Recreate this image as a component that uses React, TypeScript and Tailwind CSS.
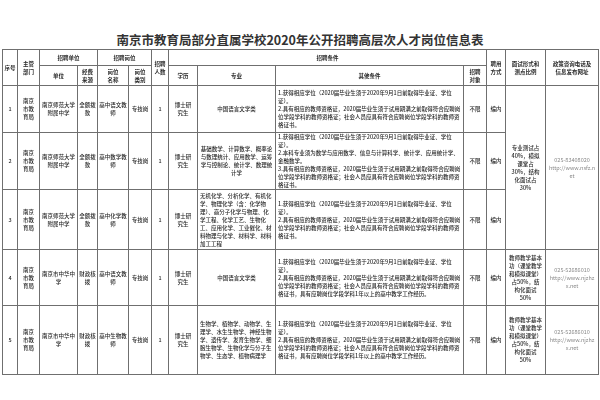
import React from "react";

const B = "border border-[#6f6f6f]";
const td = `${B} px-[1px] text-center align-middle`;
const th = `${B} px-[1px] text-center align-middle font-bold`;

const other1 = (
  <>
    <p>1.获得相应学位（2020届毕业生须于2020年9月1日前取得毕业证、学位证）。</p>
    <p>2.具有相应的教师资格证，2020届毕业生须于试用期满之前取得符合应聘岗位学段学科的教师资格证；社会人员应具有符合应聘岗位学段学科的教师资格证书。</p>
  </>
);

const other2 = (
  <>
    <p>1.获得相应学位（2020届毕业生须于2020年9月1日前取得毕业证、学位证）。</p>
    <p>2.本科专业须为数学与应用数学、信息与计算科学、统计学、应用统计学、金融数学。</p>
    <p>3.具有相应的教师资格证，2020届毕业生须于试用期满之前取得符合应聘岗位学段学科的教师资格证；社会人员应具有符合应聘岗位学段学科的教师资格证书。</p>
  </>
);

const other4 = (
  <>
    <p>1.获得相应学位（2020届毕业生须于2020年9月1日前取得毕业证、学位证）。</p>
    <p>2.具有相应的教师资格证，2020届毕业生须于试用期满之前取得符合应聘岗位学段学科的教师资格证；社会人员应具有符合应聘岗位学段学科的教师资格证书，具有应聘岗位学段学科1年以上的高中教学工作经历。</p>
  </>
);

type Row = {
  n: string;
  unit: string;
  fund: string;
  post: string;
  major: React.ReactNode;
  majorLeft?: boolean;
  other: React.ReactNode;
  h: string;
};

const rows: Row[] = [
  {
    n: "1",
    unit: "南京师范大学附属中学",
    fund: "全额拨款",
    post: "高中语文教师",
    major: "中国语言文学类",
    other: other1,
    h: "h-[47px]",
  },
  {
    n: "2",
    unit: "南京师范大学附属中学",
    fund: "全额拨款",
    post: "高中数学教师",
    major: "基础数学、计算数学、概率论与数理统计、应用数学、运筹学与控制论、统计学、数理统计学",
    other: other2,
    h: "h-[55px]",
  },
  {
    n: "3",
    unit: "南京师范大学附属中学",
    fund: "全额拨款",
    post: "高中化学教师",
    major:
      "无机化学、分析化学、有机化学、物理化学（含：化学物理）、高分子化学与物理、化学工程、化学工艺、生物化工、应用化学、工业催化、材料物理与化学、材料学、材料加工工程",
    majorLeft: true,
    other: other1,
    h: "h-[60px]",
  },
  {
    n: "4",
    unit: "南京市中华中学",
    fund: "财政核拨",
    post: "高中语文教师",
    major: "中国语言文学类",
    other: other4,
    h: "h-[56px]",
  },
  {
    n: "5",
    unit: "南京市中华中学",
    fund: "财政核拨",
    post: "高中生物教师",
    major:
      "生物学、植物学、动物学、生理学、水生生物学、神经生物学、遗传学、发育生物学、细胞生物学、生物化学与分子生物学、生态学、植物病理学",
    majorLeft: true,
    other: other4,
    h: "h-[69px]",
  },
];

function Policy({ tel, url }: { tel: string; url: string }) {
  return (
    <>
      <div>{tel}</div>
      <div className="break-all">{url}</div>
    </>
  );
}

export default function App() {
  return (
    <div
      className="w-[600px] h-[400px] bg-white text-[#2a2a2a] overflow-hidden"
      style={{ fontFamily: '"Noto Sans CJK SC", "Noto Sans", sans-serif' }}
    >
      <div className="pt-[31px]">
        <h1 className="h-[17px] leading-[17px] text-center text-[12.5px] font-bold text-[#333]">
          南京市教育局部分直属学校2020年公开招聘高层次人才岗位信息表
        </h1>
      </div>
      <div className="pl-[2px] pt-[1px]">
        <table className="table-fixed border-collapse w-[596px] text-[5.5px] leading-[8px] font-medium blur-[0.3px]">
          <colgroup>
            <col className="w-[15px]" />
            <col className="w-[22px]" />
            <col className="w-[38px]" />
            <col className="w-[20px]" />
            <col className="w-[31px]" />
            <col className="w-[23px]" />
            <col className="w-[17px]" />
            <col className="w-[29px]" />
            <col className="w-[78px]" />
            <col className="w-[188px]" />
            <col className="w-[23px]" />
            <col className="w-[19px]" />
            <col className="w-[40px]" />
            <col className="w-[53px]" />
          </colgroup>
          <thead>
            <tr className="h-[16px]">
              <th rowSpan={2} className={th}>序号</th>
              <th rowSpan={2} className={th}>主管<br />部门</th>
              <th colSpan={2} className={th}>招聘单位</th>
              <th colSpan={2} className={th}>招聘岗位</th>
              <th rowSpan={2} className={th}>招聘<br />人数</th>
              <th colSpan={4} className={th}>招聘条件</th>
              <th rowSpan={2} className={th}>聘用<br />方式</th>
              <th rowSpan={2} className={th}>面试形式和<br />测点比例</th>
              <th rowSpan={2} className={th}>政策咨询电话及<br />信息发布网址</th>
            </tr>
            <tr className="h-[20px]">
              <th className={th}>单位</th>
              <th className={th}>经费<br />来源</th>
              <th className={th}>岗位<br />名称</th>
              <th className={th}>岗位<br />类别</th>
              <th className={th}>学历</th>
              <th className={th}>专业</th>
              <th className={th}>其他条件</th>
              <th className={th}>招聘<br />对象</th>
            </tr>
          </thead>
          <tbody>
            {rows.map((r, i) => (
              <tr key={r.n} className={r.h}>
                <td className={td}>{r.n}</td>
                <td className={td}>南京<br />市教<br />育局</td>
                <td className={td}>{r.unit}</td>
                <td className={td}>{r.fund}</td>
                <td className={td}>{r.post}</td>
                <td className={td}>专技岗</td>
                <td className={td}>1</td>
                <td className={td}>博士研<br />究生</td>
                <td className={`${B} px-[2px] align-middle ${r.majorLeft ? "text-left" : "text-center"}`}>
                  {r.major}
                </td>
                <td className={`${B} px-[2px] align-middle text-left`}>{r.other}</td>
                <td className={td}>不限</td>
                <td className={td}>编内</td>
                {i === 0 && (
                  <>
                    <td rowSpan={3} className={`${td} px-[3px]`}>
                      专业测试占40%，模拟课堂占30%，结构化面试占30%
                    </td>
                    <td rowSpan={3} className={`${td} px-[2px] text-[#8a8a8a] font-normal`}>
                      <Policy tel="025-83408020" url="http://www.nsfz.net" />
                    </td>
                  </>
                )}
                {i >= 3 && (
                  <>
                    <td className={`${td} px-[3px]`}>
                      教师教学基本功（课堂教学和模拟课堂）占50%，结构化面试50%
                    </td>
                    <td className={`${td} px-[2px] text-[#8a8a8a] font-normal`}>
                      <Policy tel="025-52686010" url="http://www.njzhzx.net" />
                    </td>
                  </>
                )}
              </tr>
            ))}
          </tbody>
        </table>
      </div>
    </div>
  );
}
